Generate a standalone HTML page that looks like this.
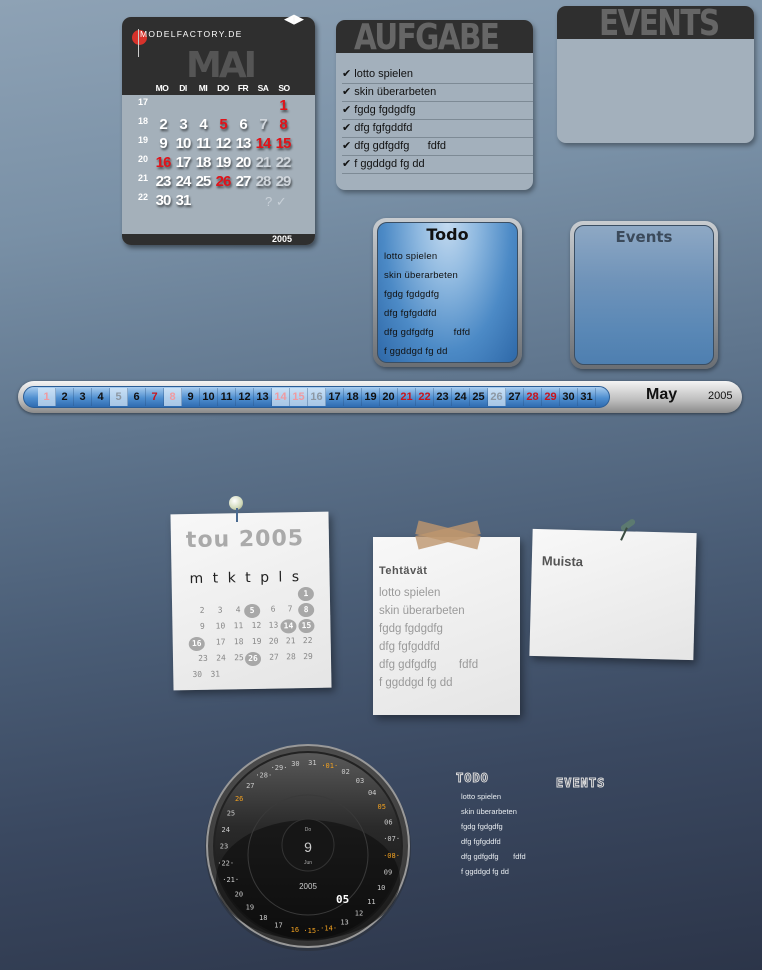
<!DOCTYPE html>
<html><head><meta charset="utf-8"><style>
*{margin:0;padding:0;box-sizing:border-box}
html{width:762px;height:970px;overflow:hidden;background:#2c3549}
body{width:762px;height:970px;overflow:hidden;position:relative;font-family:"Liberation Sans",sans-serif;
background:linear-gradient(172deg,#8ea2b5 0%,#7990a6 22%,#5f758d 42%,#4a5d76 60%,#3a4860 78%,#2c3549 100%);}
.abs{position:absolute}
#cal{left:122px;top:17px;width:193px;height:228px;border-radius:9px;overflow:hidden;background:#a4b0ba;box-shadow:2px 3px 5px rgba(0,0,0,.45)}
#cal .hd{position:absolute;left:0;top:0;width:193px;height:78px;background:#2f2f2f}
#cal .ft{position:absolute;left:0;bottom:0;width:193px;height:11px;background:#2f2f2f;color:#fff;font-size:9px;font-weight:bold;text-align:right;padding-right:23px;line-height:11px}
.num{position:absolute;width:20px;text-align:center;font-weight:bold;font-size:15px;color:#fff;text-shadow:1px 2px 2px rgba(0,0,0,.6);letter-spacing:-1px}
.wk{position:absolute;font-size:9px;color:#fff;font-weight:bold}
.r{color:#e0131a}.g{color:#d0d6dc}
.dn{position:absolute;top:66px;font-size:8.5px;font-weight:bold;color:#fff;width:22px;text-align:center;letter-spacing:-.5px}
.panel{border-radius:9px;overflow:hidden;background:#a3b0bc;box-shadow:2px 3px 5px rgba(0,0,0,.35)}
.ph{position:absolute;left:0;top:0;width:100%;background:#2f2f2f;color:#666;font-family:"DejaVu Sans",sans-serif;font-weight:bold;overflow:hidden;white-space:nowrap}
.ph span{display:inline-block;transform:scaleX(.82);transform-origin:left;letter-spacing:-2px}
.row{position:absolute;left:6px;right:0;height:18px;border-bottom:1px solid #7d8a95;font-size:11px;color:#111;line-height:17px}
.gb{border-radius:13px;padding:4px;background:linear-gradient(#c8ccd0,#6a6e73);box-shadow:1px 2px 4px rgba(0,0,0,.4)}
.gb .in{width:100%;height:100%;border-radius:10px;border:1px solid #3a4e63}
.ti{font-size:9.5px;color:#111;position:absolute;left:11px;letter-spacing:.2px}
#bar{left:18px;top:381px;width:724px;height:32px;border-radius:16px;background:linear-gradient(#f4f4f4,#bdbdbd 60%,#8a8a8a);box-shadow:0 1px 3px rgba(0,0,0,.5)}
#bari{left:23px;top:386px;width:587px;height:22px;border-radius:11px;background:linear-gradient(#a9cdef,#4f8fd0 55%,#2f6bb0);border:1px solid #2a5d96}
.c{position:absolute;top:388px;width:18px;height:18px;font-size:11px;font-weight:bold;text-align:center;line-height:18px;color:#111;border-right:1px solid rgba(40,80,130,.35)}
.c.h{background:rgba(220,235,250,.7)}
.c.pr{color:#f09aa0}.c.rd{color:#c8141c}.c.gy{color:#8d97a2}
.note{background:linear-gradient(160deg,#f8f8f8,#e5e5e5);box-shadow:3px 4px 8px rgba(0,0,0,.4)}
.nd{position:absolute;width:16px;text-align:center;font-size:8px;color:#888;font-family:"DejaVu Sans Mono",monospace}
.nd.o{background:#a8a8a8;color:#fff;border-radius:50%;height:14px;line-height:14px;font-weight:bold}
.tl{position:absolute;left:6px;font-size:11.5px;color:#9a9a9a}
.px{font-family:"DejaVu Sans Mono",monospace;font-weight:bold;color:#2f3a4e;-webkit-text-stroke:1px #ddd;letter-spacing:1px}
.bt{position:absolute;left:461px;font-size:7.5px;color:#e8ecf0}
</style></head><body>

<div id="cal" class="abs">
 <div class="hd">
  <div class="abs" style="left:10px;top:13px;width:15px;height:15px;border-radius:50%;background:#d7322b"></div>
  <div class="abs" style="left:16px;top:12px;width:1px;height:28px;background:#ccc"></div>
  <div class="abs" style="left:18px;top:12px;font-size:8.5px;color:#fff;letter-spacing:1.3px">MODELFACTORY.DE</div>
  <div class="abs" style="left:64px;top:30px;font-size:36px;font-weight:bold;color:#555;font-family:'DejaVu Sans',sans-serif;letter-spacing:-3px;line-height:38px">MAI</div>
  <div class="dn" style="left:29px">MO</div><div class="dn" style="left:50px">DI</div><div class="dn" style="left:70px">MI</div><div class="dn" style="left:90px">DO</div><div class="dn" style="left:110px">FR</div><div class="dn" style="left:130px">SA</div><div class="dn" style="left:151px">SO</div>
 </div>
 <div class="wk" style="left:16px;top:80px">17</div><div class="wk" style="left:16px;top:99px">18</div><div class="wk" style="left:16px;top:118px">19</div><div class="wk" style="left:16px;top:137px">20</div><div class="wk" style="left:16px;top:156px">21</div><div class="wk" style="left:16px;top:175px">22</div>
 <div class="num r" style="left:151px;top:80px">1</div>
 <div class="num" style="left:31px;top:99px">2</div><div class="num" style="left:51px;top:99px">3</div><div class="num" style="left:71px;top:99px">4</div><div class="num r" style="left:91px;top:99px">5</div><div class="num" style="left:111px;top:99px">6</div><div class="num g" style="left:131px;top:99px">7</div><div class="num r" style="left:151px;top:99px">8</div>
 <div class="num" style="left:31px;top:118px">9</div><div class="num" style="left:51px;top:118px">10</div><div class="num" style="left:71px;top:118px">11</div><div class="num" style="left:91px;top:118px">12</div><div class="num" style="left:111px;top:118px">13</div><div class="num r" style="left:131px;top:118px">14</div><div class="num r" style="left:151px;top:118px">15</div>
 <div class="num r" style="left:31px;top:137px">16</div><div class="num" style="left:51px;top:137px">17</div><div class="num" style="left:71px;top:137px">18</div><div class="num" style="left:91px;top:137px">19</div><div class="num" style="left:111px;top:137px">20</div><div class="num g" style="left:131px;top:137px">21</div><div class="num g" style="left:151px;top:137px">22</div>
 <div class="num" style="left:31px;top:156px">23</div><div class="num" style="left:51px;top:156px">24</div><div class="num" style="left:71px;top:156px">25</div><div class="num r" style="left:91px;top:156px">26</div><div class="num" style="left:111px;top:156px">27</div><div class="num g" style="left:131px;top:156px">28</div><div class="num g" style="left:151px;top:156px">29</div>
 <div class="num" style="left:31px;top:175px">30</div><div class="num" style="left:51px;top:175px">31</div>
 <div class="abs" style="left:143px;top:177px;font-size:13px;color:#c8d0d8">? ✓</div>
 <div class="ft">2005</div>
</div>
<div class="abs" style="left:284px;top:11px;font-size:13px;color:#fff">◀▶</div>

<div class="abs panel" style="left:336px;top:20px;width:197px;height:170px">
 <div class="ph" style="height:33px;font-size:36px;line-height:36px;padding-left:18px"><span>AUFGABE</span></div>
 <div class="row" style="top:46px">✔ lotto spielen</div>
 <div class="row" style="top:64px">✔ skin überarbeten</div>
 <div class="row" style="top:82px">✔ fgdg fgdgdfg</div>
 <div class="row" style="top:100px">✔ dfg fgfgddfd</div>
 <div class="row" style="top:118px">✔ dfg gdfgdfg &nbsp; &nbsp; &nbsp;fdfd</div>
 <div class="row" style="top:136px">✔ f ggddgd fg dd</div>
</div>
<div class="abs panel" style="left:557px;top:6px;width:197px;height:137px">
 <div class="ph" style="height:33px;font-size:36px;line-height:36px;padding-left:42px"><span>EVENTS</span></div>
</div>

<div class="abs gb" style="left:373px;top:218px;width:149px;height:149px">
 <div class="in" style="background:radial-gradient(ellipse at 50% 0%,#c3daf0 0%,#8fb9e0 30%,#4c8ac6 65%,#2e68a8 100%);position:relative">
  <div style="text-align:center;font-weight:bold;font-size:16px;color:#111;font-family:'DejaVu Sans',sans-serif;margin-top:2px">Todo</div>
  <div class="ti" style="top:28px;left:6px">lotto spielen</div>
  <div class="ti" style="top:47px;left:6px">skin überarbeten</div>
  <div class="ti" style="top:66px;left:6px">fgdg fgdgdfg</div>
  <div class="ti" style="top:85px;left:6px">dfg fgfgddfd</div>
  <div class="ti" style="top:104px;left:6px">dfg gdfgdfg &nbsp; &nbsp; &nbsp; fdfd</div>
  <div class="ti" style="top:123px;left:6px">f ggddgd fg dd</div>
 </div>
</div>
<div class="abs gb" style="left:570px;top:221px;width:148px;height:148px">
 <div class="in" style="background:linear-gradient(#8ea8c4,#6f93b9 40%,#5a88b6 75%,#4e7fb0);text-align:center;font-weight:bold;font-size:15px;color:#3b4a5b;font-family:'DejaVu Sans',sans-serif;padding-top:2px">Events</div>
</div>

<div id="bar" class="abs"></div>
<div id="bari" class="abs"></div>
<div class="c h pr" style="left:38px">1</div><div class="c" style="left:56px">2</div><div class="c" style="left:74px">3</div><div class="c" style="left:92px">4</div><div class="c h gy" style="left:110px">5</div><div class="c" style="left:128px">6</div><div class="c rd" style="left:146px">7</div><div class="c h pr" style="left:164px">8</div><div class="c" style="left:182px">9</div><div class="c" style="left:200px">10</div><div class="c" style="left:218px">11</div><div class="c" style="left:236px">12</div><div class="c" style="left:254px">13</div><div class="c h pr" style="left:272px">14</div><div class="c h pr" style="left:290px">15</div><div class="c h gy" style="left:308px">16</div><div class="c" style="left:326px">17</div><div class="c" style="left:344px">18</div><div class="c" style="left:362px">19</div><div class="c" style="left:380px">20</div><div class="c rd" style="left:398px">21</div><div class="c rd" style="left:416px">22</div><div class="c" style="left:434px">23</div><div class="c" style="left:452px">24</div><div class="c" style="left:470px">25</div><div class="c h gy" style="left:488px">26</div><div class="c" style="left:506px">27</div><div class="c rd" style="left:524px">28</div><div class="c rd" style="left:542px">29</div><div class="c" style="left:560px">30</div><div class="c" style="left:578px">31</div>
<div class="abs" style="left:646px;top:386px;font-size:16px;font-weight:bold;color:#111">May</div>
<div class="abs" style="left:708px;top:390px;font-size:11px;color:#111">2005</div>

<div class="abs note" style="left:172px;top:513px;width:158px;height:176px;transform:rotate(-1deg)">
 <div class="abs" style="left:15px;top:14px;font-size:22px;font-weight:bold;color:#aaa;font-family:'DejaVu Sans',sans-serif;letter-spacing:1px">tou 2005</div>
 <div class="abs" style="left:18px;top:57px;font-size:14px;color:#222;word-spacing:5px;font-family:'DejaVu Sans',sans-serif">m t k t p l s</div>
 <div class="nd o" style="left:126px;top:75px">1</div>
 <div class="nd" style="left:22px;top:92px">2</div><div class="nd" style="left:40px;top:92px">3</div><div class="nd" style="left:58px;top:92px">4</div><div class="nd o" style="left:72px;top:91px">5</div><div class="nd" style="left:93px;top:92px">6</div><div class="nd" style="left:110px;top:92px">7</div><div class="nd o" style="left:126px;top:91px">8</div>
 <div class="nd" style="left:22px;top:108px">9</div><div class="nd" style="left:40px;top:108px">10</div><div class="nd" style="left:58px;top:108px">11</div><div class="nd" style="left:76px;top:108px">12</div><div class="nd" style="left:93px;top:108px">13</div><div class="nd o" style="left:108px;top:107px">14</div><div class="nd o" style="left:126px;top:107px">15</div>
 <div class="nd o" style="left:16px;top:123px">16</div><div class="nd" style="left:40px;top:124px">17</div><div class="nd" style="left:58px;top:124px">18</div><div class="nd" style="left:76px;top:124px">19</div><div class="nd" style="left:93px;top:124px">20</div><div class="nd" style="left:110px;top:124px">21</div><div class="nd" style="left:127px;top:124px">22</div>
 <div class="nd" style="left:22px;top:140px">23</div><div class="nd" style="left:40px;top:140px">24</div><div class="nd" style="left:58px;top:140px">25</div><div class="nd o" style="left:72px;top:139px">26</div><div class="nd" style="left:93px;top:140px">27</div><div class="nd" style="left:110px;top:140px">28</div><div class="nd" style="left:127px;top:140px">29</div>
 <div class="nd" style="left:16px;top:156px">30</div><div class="nd" style="left:34px;top:156px">31</div>
</div>
<div class="abs" style="left:229px;top:496px;width:14px;height:14px;border-radius:50%;background:radial-gradient(circle at 40% 35%,#fff,#cfd8b8 60%,#8a9070)"></div>
<div class="abs" style="left:236px;top:508px;width:2px;height:14px;background:#4a6a90"></div>

<div class="abs note" style="left:373px;top:537px;width:147px;height:178px">
 <div class="abs" style="left:6px;top:28px;font-size:11px;font-weight:bold;color:#555;letter-spacing:.5px">Tehtävät</div>
 <div class="tl" style="top:50px">lotto spielen</div>
 <div class="tl" style="top:68px">skin überarbeten</div>
 <div class="tl" style="top:86px">fgdg fgdgdfg</div>
 <div class="tl" style="top:104px">dfg fgfgddfd</div>
 <div class="tl" style="top:122px">dfg gdfgdfg &nbsp; &nbsp; &nbsp; fdfd</div>
 <div class="tl" style="top:140px">f ggddgd fg dd</div>
</div>
<div class="abs" style="left:416px;top:528px;width:64px;height:14px;background:rgba(190,150,110,.8);transform:rotate(14deg)"></div>
<div class="abs" style="left:416px;top:528px;width:64px;height:14px;background:rgba(190,150,110,.8);transform:rotate(-14deg)"></div>

<div class="abs note" style="left:531px;top:531px;width:164px;height:127px;transform:rotate(1.5deg)">
 <div class="abs" style="left:10px;top:24px;font-size:13px;font-weight:bold;color:#555">Muista</div>
</div>
<div class="abs" style="left:620px;top:522px;width:16px;height:6px;background:#5c7a70;transform:rotate(-35deg);border-radius:3px"></div>
<div class="abs" style="left:623px;top:527px;width:2px;height:14px;background:#3a4a40;transform:rotate(25deg)"></div>

<svg class="abs" style="left:0;top:0" width="762" height="970">
 <defs>
  <radialGradient id="ring" cx="50%" cy="40%" r="60%"><stop offset="0" stop-color="#777"/><stop offset="1" stop-color="#333"/></radialGradient>
  <linearGradient id="face" x1="0" y1="0" x2="0" y2="1"><stop offset="0" stop-color="#5a5a5a"/><stop offset=".4" stop-color="#2a2a2a"/><stop offset="1" stop-color="#0e0e0e"/></linearGradient>
 </defs>
 <circle cx="308" cy="848" r="103" fill="#2a2d33" opacity=".5"/>
 <circle cx="308" cy="846" r="101" fill="url(#ring)" stroke="#999" stroke-width="2"/>
 <circle cx="308" cy="846" r="94" fill="url(#face)" stroke="#222" stroke-width="2"/>
 <ellipse cx="308" cy="880" rx="92" ry="60" fill="#0d0d0d" opacity=".6"/>
 <circle cx="308" cy="855" r="60" fill="none" stroke="#3a3a3a" stroke-width="1"/>
 <circle cx="308" cy="845" r="26" fill="#161616" stroke="#333"/>
 <text x="308" y="831" fill="#aaa" font-size="5" text-anchor="middle" font-family="Liberation Sans">Do</text>
 <text x="308" y="852" fill="#ccc" font-size="14" text-anchor="middle" font-family="Liberation Sans">9</text>
 <text x="308" y="864" fill="#aaa" font-size="5" text-anchor="middle" font-family="Liberation Sans">Jun</text>
 <text x="308" y="889" fill="#ccc" font-size="8" text-anchor="middle" font-family="Liberation Sans">2005</text>
 <text x="336" y="903" fill="#fff" font-size="11" font-weight="bold" font-family="DejaVu Sans Mono">05</text>
 <g font-family="DejaVu Sans Mono" font-size="7" text-anchor="middle" fill="#ccc">
  <g transform="translate(308,849)">
   <text transform="rotate(15) translate(0,-84) rotate(-15)" fill="#f0a020">·01·</text>
   <text transform="rotate(26.6) translate(0,-84) rotate(-26.6)">02</text>
   <text transform="rotate(38.2) translate(0,-84) rotate(-38.2)">03</text>
   <text transform="rotate(49.8) translate(0,-84) rotate(-49.8)">04</text>
   <text transform="rotate(61.4) translate(0,-84) rotate(-61.4)" fill="#f0a020">05</text>
   <text transform="rotate(73) translate(0,-84) rotate(-73)">06</text>
   <text transform="rotate(84.6) translate(0,-84) rotate(-84.6)">·07·</text>
   <text transform="rotate(96.2) translate(0,-84) rotate(-96.2)" fill="#f0a020">·08·</text>
   <text transform="rotate(107.8) translate(0,-84) rotate(-107.8)">09</text>
   <text transform="rotate(119.4) translate(0,-84) rotate(-119.4)">10</text>
   <text transform="rotate(131) translate(0,-84) rotate(-131)">11</text>
   <text transform="rotate(142.6) translate(0,-84) rotate(-142.6)">12</text>
   <text transform="rotate(154.2) translate(0,-84) rotate(-154.2)">13</text>
   <text transform="rotate(165.8) translate(0,-84) rotate(-165.8)" fill="#f0a020">·14·</text>
   <text transform="rotate(177.4) translate(0,-84) rotate(-177.4)" fill="#f0a020">·15·</text>
   <text transform="rotate(189) translate(0,-84) rotate(-189)" fill="#f0a020">16</text>
   <text transform="rotate(200.6) translate(0,-84) rotate(-200.6)">17</text>
   <text transform="rotate(212.2) translate(0,-84) rotate(-212.2)">18</text>
   <text transform="rotate(223.8) translate(0,-84) rotate(-223.8)">19</text>
   <text transform="rotate(235.4) translate(0,-84) rotate(-235.4)">20</text>
   <text transform="rotate(247) translate(0,-84) rotate(-247)">·21·</text>
   <text transform="rotate(258.6) translate(0,-84) rotate(-258.6)">·22·</text>
   <text transform="rotate(270.2) translate(0,-84) rotate(-270.2)">23</text>
   <text transform="rotate(281.8) translate(0,-84) rotate(-281.8)">24</text>
   <text transform="rotate(293.4) translate(0,-84) rotate(-293.4)">25</text>
   <text transform="rotate(305) translate(0,-84) rotate(-305)" fill="#f0a020">26</text>
   <text transform="rotate(316.6) translate(0,-84) rotate(-316.6)">27</text>
   <text transform="rotate(328.2) translate(0,-84) rotate(-328.2)">·28·</text>
   <text transform="rotate(339.8) translate(0,-84) rotate(-339.8)">·29·</text>
   <text transform="rotate(351.4) translate(0,-84) rotate(-351.4)">30</text>
   <text transform="rotate(363) translate(0,-84) rotate(-363)">31</text>
  </g>
 </g>
</svg>

<div class="abs px" style="left:456px;top:771px;font-size:12px">TODO</div>
<div class="abs px" style="left:556px;top:776px;font-size:12px">EVENTS</div>
<div class="bt" style="top:792px">lotto spielen</div>
<div class="bt" style="top:807px">skin überarbeten</div>
<div class="bt" style="top:822px">fgdg fgdgdfg</div>
<div class="bt" style="top:837px">dfg fgfgddfd</div>
<div class="bt" style="top:852px">dfg gdfgdfg &nbsp; &nbsp; &nbsp; fdfd</div>
<div class="bt" style="top:867px">f ggddgd fg dd</div>
</body></html>
